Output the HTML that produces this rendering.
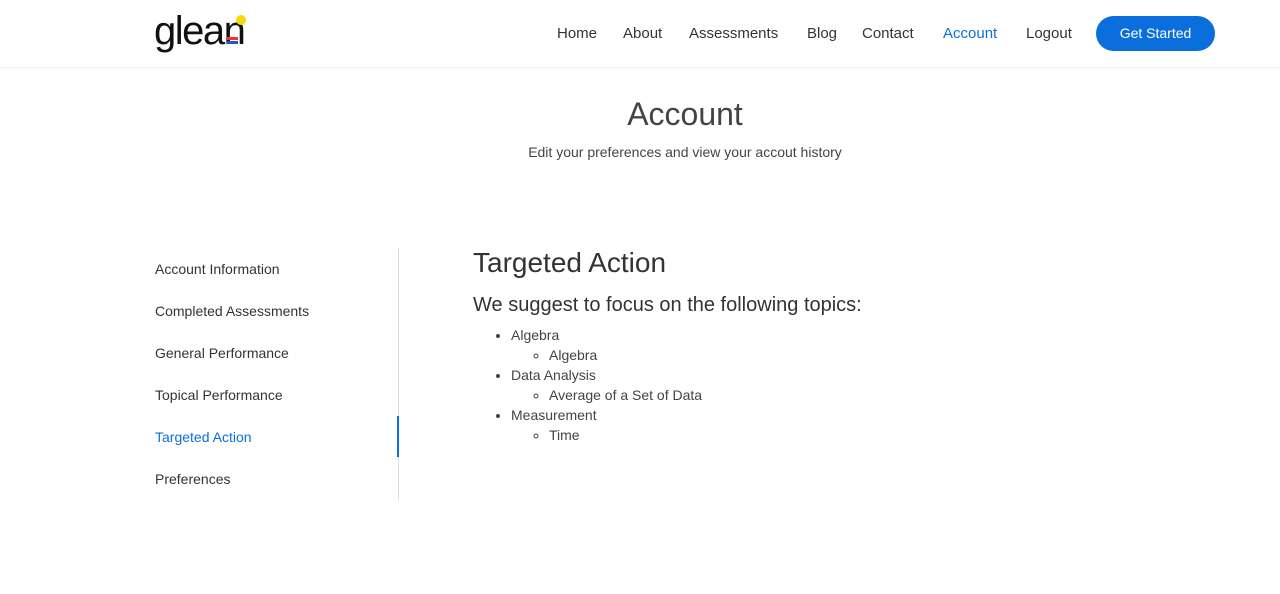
<!DOCTYPE html>
<html><head><meta charset="utf-8"><style>
*{margin:0;padding:0;box-sizing:border-box}
body{width:1280px;height:594px;background:#fff;font-family:"Liberation Sans",sans-serif;color:#333;position:relative;overflow:hidden}
.hdr{position:absolute;left:0;top:0;width:1280px;height:68px;border-bottom:1px solid #f0f0f0;box-shadow:0 1px 3px rgba(0,0,0,.04)}
.logo{position:absolute;left:154px;top:9px;font-size:40px;font-weight:normal;color:#111;letter-spacing:-1.5px;font-family:"Liberation Sans",sans-serif}
.nav{position:absolute;top:25px;font-size:15px;color:#333}
.btn{position:absolute;left:1096px;top:16px;width:119px;height:35px;border-radius:18px;background:#0a6fdc;color:#fff;font-size:14px;text-align:center;line-height:35px}
.t{position:absolute;left:0;width:1370px;text-align:center}
.side{position:absolute;left:155px;font-size:14px;color:#333}
ul{list-style:disc}
</style></head><body>
<div class="hdr">
<div class="logo">glean</div>
<div style="position:absolute;left:236px;top:15px;width:10px;height:10px;border-radius:50%;background:#f5d90a"></div>
<div style="position:absolute;left:227px;top:37px;width:11px;height:3px;background:#e33"></div>
<div style="position:absolute;left:227px;top:41px;width:11px;height:3px;background:#2255cc"></div>
<span class="nav" style="left:557px">Home</span>
<span class="nav" style="left:623px">About</span>
<span class="nav" style="left:689px">Assessments</span>
<span class="nav" style="left:807px">Blog</span>
<span class="nav" style="left:862px">Contact</span>
<span class="nav" style="left:943px;color:#0a6fdc">Account</span>
<span class="nav" style="left:1026px">Logout</span>
<div class="btn">Get Started</div>
</div>
<div class="t" style="top:96px;font-size:32px;color:#444">Account</div>
<div class="t" style="top:144px;font-size:14px;color:#444">Edit your preferences and view your accout history</div>
<div class="side" style="top:261px">Account Information</div>
<div class="side" style="top:303px">Completed Assessments</div>
<div class="side" style="top:345px">General Performance</div>
<div class="side" style="top:387px">Topical Performance</div>
<div class="side" style="top:429px;color:#0a6fdc">Targeted Action</div>
<div class="side" style="top:471px">Preferences</div>
<div style="position:absolute;left:398px;top:248px;width:1px;height:252px;background:#ddd"></div>
<div style="position:absolute;left:397px;top:416px;width:2px;height:41px;background:#0a6fdc"></div>
<div style="position:absolute;left:473px;top:247px;font-size:28px;color:#333">Targeted Action</div>
<div style="position:absolute;left:473px;top:294px;font-size:20px;color:#333">We suggest to focus on the following topics:</div>
<ul style="position:absolute;left:511px;top:325px;font-size:14px;line-height:20px;color:#444">
<li>Algebra<ul style="list-style:circle;margin-left:38px"><li>Algebra</li></ul></li>
<li>Data Analysis<ul style="list-style:circle;margin-left:38px"><li>Average of a Set of Data</li></ul></li>
<li>Measurement<ul style="list-style:circle;margin-left:38px"><li>Time</li></ul></li>
</ul>
</body></html>
